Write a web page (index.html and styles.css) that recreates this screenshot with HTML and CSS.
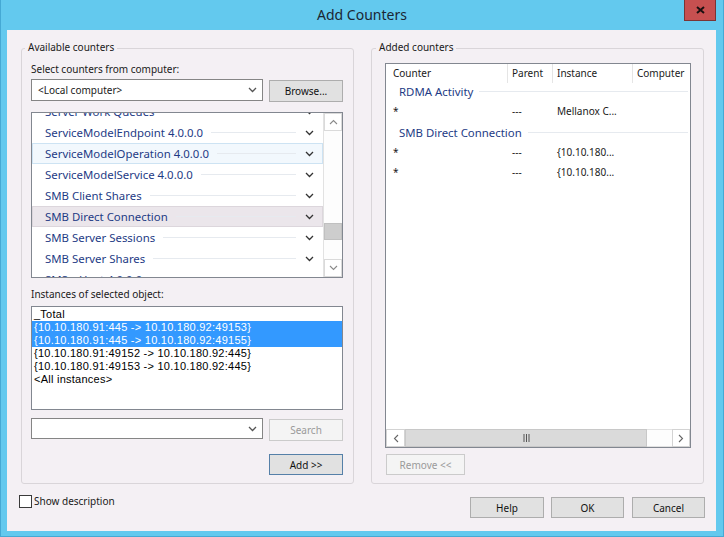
FILE: index.html
```html
<!DOCTYPE html>
<html>
<head>
<meta charset="utf-8">
<link rel="stylesheet" href="styles.css">
</head>
<body>
<div class="window">
  <div class="titlebar">
    <span></span>
    <div class="title">Add Counters</div>
    <div class="close"><svg width="9" height="8" viewBox="0 0 9 8"><path d="M1 1L8 7M8 1L1 7" fill="none" stroke="#1a1010" stroke-width="2"/></svg></div>
  </div>
  <div class="client">
    <div class="groups">
      <section class="group group-left">
        <div class="group-title gt-left">Available counters</div>
        <div class="lbl lbl-top">Select counters from computer:</div>
        <div class="combo-row">
          <div class="combo"><span>&lt;Local computer&gt;</span><svg class="chev" width="9" height="6" viewBox="0 0 9 6"><path d="M1 1L4.5 4.5L8 1" fill="none" stroke="#555" stroke-width="1.3"/></svg></div>
          <div class="btn browse">Browse...</div>
        </div>
        <div class="counter-list">
          <div class="crows">
            <div class="crow"><span class="ctext">Server Work Queues</span><span class="cline"></span><svg class="chev" width="9" height="6" viewBox="0 0 9 6"><path d="M1 1L4.5 4.5L8 1" fill="none" stroke="#333" stroke-width="1.3"/></svg></div>
            <div class="crow"><span class="ctext">ServiceModelEndpoint 4.0.0.0</span><span class="cline"></span><svg class="chev" width="9" height="6" viewBox="0 0 9 6"><path d="M1 1L4.5 4.5L8 1" fill="none" stroke="#333" stroke-width="1.3"/></svg></div>
            <div class="crow hot"><span class="ctext">ServiceModelOperation 4.0.0.0</span><span class="cline"></span><svg class="chev" width="9" height="6" viewBox="0 0 9 6"><path d="M1 1L4.5 4.5L8 1" fill="none" stroke="#333" stroke-width="1.3"/></svg></div>
            <div class="crow"><span class="ctext">ServiceModelService 4.0.0.0</span><span class="cline"></span><svg class="chev" width="9" height="6" viewBox="0 0 9 6"><path d="M1 1L4.5 4.5L8 1" fill="none" stroke="#333" stroke-width="1.3"/></svg></div>
            <div class="crow"><span class="ctext">SMB Client Shares</span><span class="cline"></span><svg class="chev" width="9" height="6" viewBox="0 0 9 6"><path d="M1 1L4.5 4.5L8 1" fill="none" stroke="#333" stroke-width="1.3"/></svg></div>
            <div class="crow sel"><span class="ctext">SMB Direct Connection</span><span class="cline"></span><svg class="chev" width="9" height="6" viewBox="0 0 9 6"><path d="M1 1L4.5 4.5L8 1" fill="none" stroke="#333" stroke-width="1.3"/></svg></div>
            <div class="crow"><span class="ctext">SMB Server Sessions</span><span class="cline"></span><svg class="chev" width="9" height="6" viewBox="0 0 9 6"><path d="M1 1L4.5 4.5L8 1" fill="none" stroke="#333" stroke-width="1.3"/></svg></div>
            <div class="crow"><span class="ctext">SMB Server Shares</span><span class="cline"></span><svg class="chev" width="9" height="6" viewBox="0 0 9 6"><path d="M1 1L4.5 4.5L8 1" fill="none" stroke="#333" stroke-width="1.3"/></svg></div>
            <div class="crow"><span class="ctext">SMSvcHost 4.0.0.0</span><span class="cline"></span><svg class="chev" width="9" height="6" viewBox="0 0 9 6"><path d="M1 1L4.5 4.5L8 1" fill="none" stroke="#333" stroke-width="1.3"/></svg></div>
          </div>
          <div class="vscroll">
            <div class="sb-btn"><svg width="9" height="6" viewBox="0 0 9 6"><path d="M1 5L4.5 1.5L8 5" fill="none" stroke="#8a8a8a" stroke-width="1.1"/></svg></div>
            <div class="sb-track"><div class="sb-thumb"></div></div>
            <div class="sb-btn"><svg width="9" height="6" viewBox="0 0 9 6"><path d="M1 1L4.5 4.5L8 1" fill="none" stroke="#8a8a8a" stroke-width="1.1"/></svg></div>
          </div>
        </div>
        <div class="lbl lbl-inst">Instances of selected object:</div>
        <div class="inst-list">
          <div class="irow">_Total</div>
          <div class="irow sel">{10.10.180.91:445 -&gt; 10.10.180.92:49153}</div>
          <div class="irow sel">{10.10.180.91:445 -&gt; 10.10.180.92:49155}</div>
          <div class="irow">{10.10.180.91:49152 -&gt; 10.10.180.92:445}</div>
          <div class="irow">{10.10.180.91:49153 -&gt; 10.10.180.92:445}</div>
          <div class="irow">&lt;All instances&gt;</div>
        </div>
        <div class="search-row">
          <div class="combo combo-search"><span></span><svg class="chev" width="9" height="6" viewBox="0 0 9 6"><path d="M1 1L4.5 4.5L8 1" fill="none" stroke="#555" stroke-width="1.3"/></svg></div>
          <div class="btn disabled search-btn">Search</div>
        </div>
        <div class="btn default add-btn">Add &gt;&gt;</div>
      </section>
      <section class="group group-right">
        <div class="group-title gt-right">Added counters</div>
        <div class="lv">
          <div class="lv-head">
            <div class="col c1">Counter</div>
            <div class="col c2">Parent</div>
            <div class="col c3">Instance</div>
            <div class="col c4">Computer</div>
          </div>
          <div class="lv-body">
            <div class="lv-group"><span>RDMA Activity</span><span class="gline"></span></div>
            <div class="lv-row"><div class="col c1">*</div><div class="col c2">---</div><div class="col c3">Mellanox C...</div><div class="col c4"></div></div>
            <div class="lv-group next"><span>SMB Direct Connection</span><span class="gline"></span></div>
            <div class="lv-row"><div class="col c1">*</div><div class="col c2">---</div><div class="col c3">{10.10.180...</div><div class="col c4"></div></div>
            <div class="lv-row"><div class="col c1">*</div><div class="col c2">---</div><div class="col c3">{10.10.180...</div><div class="col c4"></div></div>
          </div>
          <div class="hscroll">
            <div class="h-btn"><svg width="6" height="9" viewBox="0 0 6 9"><path d="M5 1L1.5 4.5L5 8" fill="none" stroke="#666" stroke-width="1.1"/></svg></div>
            <div class="h-thumb"><svg width="7" height="8" viewBox="0 0 7 8"><path d="M1 0V8M3.5 0V8M6 0V8" fill="none" stroke="#555" stroke-width="1"/></svg></div>
            <div class="h-space"></div>
            <div class="h-btn h-right"><svg width="6" height="9" viewBox="0 0 6 9"><path d="M1 1L4.5 4.5L1 8" fill="none" stroke="#666" stroke-width="1.1"/></svg></div>
          </div>
        </div>
        <div class="btn disabled remove-btn">Remove &lt;&lt;</div>
      </section>
    </div>
    <div class="bottom">
      <div class="chk-wrap"><span class="chk"></span><span class="chk-label">Show description</span></div>
      <div class="actions">
        <div class="btn help">Help</div>
        <div class="btn ok">OK</div>
        <div class="btn cancel">Cancel</div>
      </div>
    </div>
  </div>
</div>
</body>
</html>
```
FILE: styles.css
```css
* { box-sizing: border-box; margin: 0; padding: 0; }
html, body { width: 724px; height: 537px; overflow: hidden; }
body {
  background: #63c9ee;
  font-family: "Noto Sans", "Open Sans", sans-serif;
  font-size: 10px;
  color: #1a1a1a;
}
.window {
  width: 724px;
  height: 537px;
  display: flex;
  flex-direction: column;
  background: #63c9ee;
  box-shadow: inset 1px 0 #45a9d4, inset -1px 0 #45a9d4, inset 0 -1px #45a9d4;
}
.titlebar {
  height: 30px;
  flex: none;
  display: grid;
  grid-template-columns: 1fr auto 1fr;
  padding: 0 8px;
}
.title {
  font-size: 14px;
  line-height: 30px;
  color: #1b2633;
}
.close {
  justify-self: end;
  width: 32px;
  height: 21px;
  background: #c75050;
  border: 1px solid #7b3434;
  border-top: none;
  display: flex;
  align-items: center;
  justify-content: center;
}
.client {
  flex: 1;
  margin: 0 8px 6px 7px;
  background: #f4f0f4;
  display: flex;
  flex-direction: column;
  padding: 18px 11px 0 14px;
}
.groups {
  display: grid;
  grid-template-columns: 333px 333px;
  column-gap: 17px;
}
.group {
  height: 436px;
  border: 1px solid #d9d5d9;
  border-radius: 3px;
  display: flex;
  flex-direction: column;
}
.group-left { padding: 0 10px 0 9px; }
.group-right { padding: 0 12px 0 13px; }
.group-title {
  align-self: flex-start;
  margin-top: -9px;
  padding: 0 3px;
  line-height: 14px;
  background: #f4f0f4;
}
.gt-left { margin-left: -6px; }
.gt-right { margin-left: -9px; }
.lbl { line-height: 14px; }
.lbl-top { margin-top: 8px; }
.lbl-inst { margin-top: 9px; }

.combo-row, .search-row {
  display: flex;
  justify-content: space-between;
  align-items: flex-start;
  height: 23px;
}
.combo-row { margin-top: 3px; }
.search-row { margin-top: 8px; }
.combo {
  width: 232px;
  height: 22px;
  border: 1px solid #858585;
  background: #fff;
  display: flex;
  align-items: center;
  justify-content: space-between;
  padding: 0 5px 0 6px;
}
.combo-search { height: 21px; }

.btn {
  width: 74px;
  height: 22px;
  background: #e1e1e1;
  border: 1px solid #adadad;
  display: flex;
  align-items: center;
  justify-content: center;
  color: #111;
}
.btn.default { border-color: #5580a8; }
.btn.disabled {
  background: #f4f4f4;
  border-color: #cbcbcb;
  color: #9a9a9a;
}
.browse { margin-top: 1px; }
.search-btn { margin-top: 1px; }
.add-btn { align-self: flex-end; height: 21px; margin-top: 13px; }
.remove-btn { width: 79px; height: 21px; margin-top: 6px; margin-left: 1px; }

.counter-list {
  margin-top: 10px;
  height: 166px;
  border: 1px solid #828790;
  background: #fff;
  display: flex;
  overflow: hidden;
}
.crows {
  flex: 1;
  align-self: flex-start;
  margin-top: -12px;
}
.crow {
  height: 21px;
  display: flex;
  align-items: center;
  padding: 0 8px 0 12px;
  border: 1px solid transparent;
  font-size: 11.4px;
  color: #1e3b85;
  white-space: nowrap;
}
.crow.hot { background: #f2f8fd; border-color: #cde3f3; }
.crow.sel { background: #ebe6eb; border-color: #dcd6dc; }
.cline {
  flex: 1;
  height: 1px;
  background: #e6eaef;
  margin: 0 9px 0 8px;
}
.chev { flex: none; display: block; }

.vscroll {
  width: 19px;
  flex: none;
  display: flex;
  flex-direction: column;
  border-left: 1px solid #e2e2e2;
  background: #fdfdfd;
}
.sb-btn {
  height: 18px;
  flex: none;
  display: flex;
  align-items: center;
  justify-content: center;
  border: 1px solid #dadada;
  background: #fff;
}
.sb-track { flex: 1; }
.sb-thumb {
  margin-top: 92px;
  height: 17px;
  background: #cdcdcd;
  border: 1px solid #c0c0c0;
}

.inst-list {
  margin-top: 5px;
  height: 104px;
  border: 1px solid #828790;
  background: #fff;
  padding-top: 1px;
  font-family: "Liberation Sans", Arial, sans-serif;
  font-size: 11px;
  letter-spacing: 0.25px;
  color: #000;
}
.irow {
  height: 13px;
  line-height: 13px;
  padding-left: 2px;
  white-space: nowrap;
}
.irow.sel { background: #3399ff; color: #fff; }

.lv {
  margin-top: 9px;
  height: 385px;
  border: 1px solid #828790;
  background: #fff;
  display: flex;
  flex-direction: column;
}
.lv-head, .lv-row {
  display: grid;
  grid-template-columns: 121px 45px 80px 1fr;
}
.lv-head { height: 18px; line-height: 19px; flex: none; }
.lv-head .col { border-left: 1px solid #e5e5e5; padding-left: 4px; }
.lv-head .c1 { border-left: none; padding-left: 7px; }
.lv-body { flex: 1; }
.lv-row { height: 20px; line-height: 20px; }
.lv-row .col { padding-left: 5px; white-space: nowrap; }
.lv-row .c1 { padding-left: 7px; }
.lv-group {
  height: 20px;
  display: flex;
  align-items: center;
  padding: 0 2px 0 13px;
  font-size: 11.4px;
  color: #1e3b85;
  white-space: nowrap;
  margin-top: -1px;
}
.lv-group.next { margin-top: 1px; }
.gline {
  flex: 1;
  height: 1px;
  background: #e6eaef;
  margin-left: 6px;
}
.hscroll {
  height: 18px;
  flex: none;
  display: flex;
  background: #fdfdfd;
}
.h-btn {
  width: 19px;
  flex: none;
  border: 1px solid #d3d3d3;
  background: #fff;
  display: flex;
  align-items: center;
  justify-content: center;
}
.h-right { width: 18px; }
.h-thumb {
  width: 242px;
  flex: none;
  background: #dadada;
  border: 1px solid #c8c8c8;
  display: flex;
  align-items: center;
  justify-content: center;
}
.h-space { flex: 1; border-top: 1px solid #e2e2e2; border-bottom: 1px solid #e2e2e2; }

.bottom {
  display: flex;
  align-items: flex-start;
  margin-top: 11px;
  margin-left: -2px;
}
.chk-wrap { display: flex; align-items: center; height: 13px; }
.chk {
  width: 13px;
  height: 13px;
  border: 1px solid #3a3a3a;
  background: #fff;
  margin-right: 2px;
}
.chk-label { line-height: 13px; }
.actions {
  margin-left: auto;
  margin-top: 2px;
  display: flex;
}
.actions .btn { height: 21px; width: 73px; }
.actions .help { width: 74px; margin-right: 7px; }
.actions .ok { margin-right: 8px; }
```
